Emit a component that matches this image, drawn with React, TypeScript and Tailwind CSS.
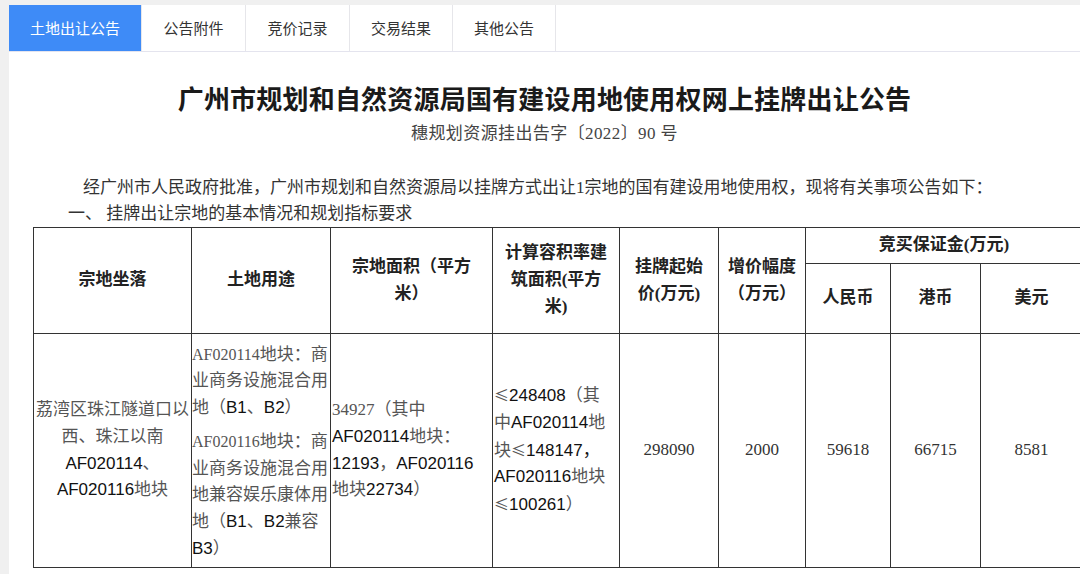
import React from "react";

const serif = "font-['Liberation_Serif','Noto_Sans_CJK_SC',serif]";

function K({ children }: { children: React.ReactNode }) {
  return (
    <span className="font-['Liberation_Sans','Noto_Sans_CJK_SC',sans-serif] text-[#111]">
      {children}
    </span>
  );
}

// the wide "≤" as in the reference
function Le() {
  return <span className="font-['Noto_Sans_CJK_SC',sans-serif] text-[15px] text-[#555]">≤</span>;
}

const tabs = [
  { label: "土地出让公告", w: "w-[133px]" },
  { label: "公告附件", w: "w-[104px]" },
  { label: "竞价记录", w: "w-[104px]" },
  { label: "交易结果", w: "w-[103px]" },
  { label: "其他公告", w: "w-[103px]" },
];

export default function App() {
  return (
    <div className="h-[574px] w-[1080px] overflow-hidden bg-[#f0f0f0] pt-[5px] pl-[9px]">
      <div className="h-full bg-white">
        <div className="flex h-[47px] border-b border-[#e4e4ee]">
          {tabs.map((t, i) => (
            <div
              key={t.label}
              className={
                t.w +
                " flex items-center justify-center border-r border-[#e6e6ea] text-[15px] font-['Noto_Sans_CJK_SC',sans-serif] " +
                (i === 0 ? "bg-[#3e8bf7] text-white" : "text-[#333]")
              }
            >
              {t.label}
            </div>
          ))}
        </div>

        <h1
          className={
            serif +
            " mt-[33px] text-center text-[26px] leading-[32px] font-bold text-[#1a1a1a] tracking-[0.2px]"
          }
        >
          广州市规划和自然资源局国有建设用地使用权网上挂牌出让公告
        </h1>
        <div className={serif + " mt-[5px] text-center text-[17px] leading-[24px] text-[#444] tracking-[0.4px]"}>
          穗规划资源挂出告字〔2022〕90 号
        </div>

        <div className={serif + " pl-[24px] text-[17px] leading-[26px] text-[#333]"}>
          <p className="mt-[29px] indent-[50px] whitespace-nowrap">
            经广州市人民政府批准，广州市规划和自然资源局以挂牌方式出让1宗地的国有建设用地使用权，现将有关事项公告如下：
          </p>
          <p className="indent-[35px] whitespace-nowrap">一、 挂牌出让宗地的基本情况和规划指标要求</p>

          <table className="table-fixed w-[1049px] border-collapse text-[17px] leading-[26.7px]">
            <colgroup>
              <col className="w-[158px]" />
              <col className="w-[139px]" />
              <col className="w-[162px]" />
              <col className="w-[127px]" />
              <col className="w-[99px]" />
              <col className="w-[87px]" />
              <col className="w-[85px]" />
              <col className="w-[90px]" />
              <col className="w-[102px]" />
            </colgroup>
            <thead className="font-bold text-[#222]">
              <tr className="h-[36px]">
                <th rowSpan={2} className="border border-[#333] font-bold">宗地坐落</th>
                <th rowSpan={2} className="border border-[#333] font-bold">土地用途</th>
                <th rowSpan={2} className="border border-[#333] font-bold">
                  宗地面积（平方
                  <br />
                  米）
                </th>
                <th rowSpan={2} className="border border-[#333] font-bold">
                  计算容积率建
                  <br />
                  筑面积(平方
                  <br />
                  米)
                </th>
                <th rowSpan={2} className="border border-[#333] font-bold">
                  挂牌起始
                  <br />
                  价(万元)
                </th>
                <th rowSpan={2} className="border border-[#333] font-bold">
                  增价幅度
                  <br />
                  （万元）
                </th>
                <th colSpan={3} className="border border-[#333] font-bold">竞买保证金(万元)</th>
              </tr>
              <tr className="h-[70px]">
                <th className="border border-[#333] font-bold">人民币</th>
                <th className="border border-[#333] font-bold">港币</th>
                <th className="border border-[#333] font-bold">美元</th>
              </tr>
            </thead>
            <tbody className="text-[#555]">
              <tr className="h-[234px]">
                <td className="border border-[#333] text-center whitespace-nowrap">
                  <div>荔湾区珠江隧道口以</div>
                  <div>西、珠江以南</div>
                  <div>
                    <K>AF020114</K>、
                  </div>
                  <div>
                    <K>AF020116</K>地块
                  </div>
                </td>
                <td className="border border-[#333] whitespace-nowrap p-0 pt-[3px]">
                  <div>
                    <span className="text-[16px]">AF020114</span>地块：商
                  </div>
                  <div>业商务设施混合用</div>
                  <div>
                    地（<K>B1</K>、<K>B2</K>）
                  </div>
                  <div className="mt-[7px]">
                    <span className="text-[16px]">AF020116</span>地块：商
                  </div>
                  <div>业商务设施混合用</div>
                  <div>地兼容娱乐康体用</div>
                  <div>
                    地（<K>B1</K>、<K>B2</K>兼容
                  </div>
                  <div>
                    <K>B3</K>）
                  </div>
                </td>
                <td className="border border-[#333] whitespace-nowrap pl-px">
                  <div>34927（其中</div>
                  <div>
                    <K>AF020114</K>地块：
                  </div>
                  <div>
                    <K>12193</K>，<K>AF020116</K>
                  </div>
                  <div>
                    地块<K>22734</K>）
                  </div>
                </td>
                <td className="border border-[#333] whitespace-nowrap pl-px">
                  <div>
                    <Le />
                    <K>248408</K>（其
                  </div>
                  <div>
                    中<K>AF020114</K>地
                  </div>
                  <div>
                    块<Le />
                    <K>148147，</K>
                  </div>
                  <div>
                    <K>AF020116</K>地块
                  </div>
                  <div>
                    <Le />
                    <K>100261</K>）
                  </div>
                </td>
                <td className="border border-[#333] text-center text-[#333]">298090</td>
                <td className="border border-[#333] text-center text-[#333]">2000</td>
                <td className="border border-[#333] text-center text-[#333]">59618</td>
                <td className="border border-[#333] text-center text-[#333]">66715</td>
                <td className="border border-[#333] text-center text-[#333]">8581</td>
              </tr>
            </tbody>
          </table>
        </div>
      </div>
    </div>
  );
}
